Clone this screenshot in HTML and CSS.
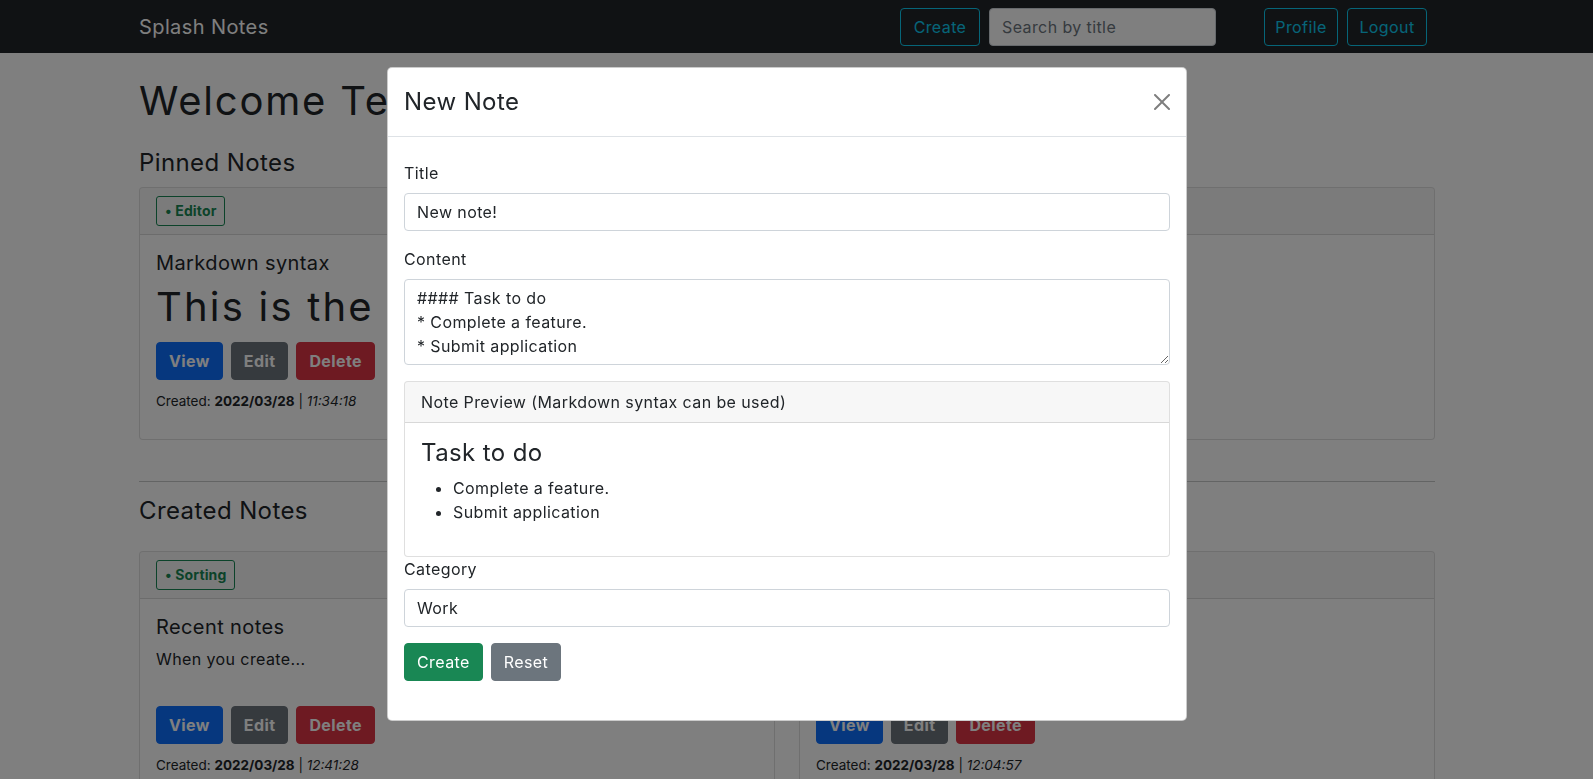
FILE: index.html
```html
<!DOCTYPE html>
<html lang="en">
<head>
<meta charset="utf-8">
<title>Splash Notes</title>
<link rel="stylesheet" href="styles.css">
</head>
<body>
<nav class="navbar">
  <div class="container nav-inner">
    <a class="brand" href="#">Splash Notes</a>
    <div class="nav-right">
      <form class="search-form">
        <button type="button" class="btn btn-outline-info nav-btn-create">Create</button>
        <input class="form-control search" type="search" placeholder="Search by title">
      </form>
      <div class="nav-links">
        <button type="button" class="btn btn-outline-info nav-btn-profile">Profile</button>
        <button type="button" class="btn btn-outline-info nav-btn-logout">Logout</button>
      </div>
    </div>
  </div>
</nav>

<div class="page-wrap">
  <main class="container page">
    <h1 class="welcome">Welcome Tester</h1>

    <h4 class="section-title">Pinned Notes</h4>
    <div class="card">
      <div class="card-header"><span class="cat-badge">&bull; Editor</span></div>
      <div class="card-body">
        <div class="note-preview">
          <h5 class="note-title">Markdown syntax</h5>
          <div class="note-md"><h1>This is the Markdown</h1></div>
        </div>
        <div class="note-actions">
          <button type="button" class="btn btn-bold btn-primary">View</button>
          <button type="button" class="btn btn-bold btn-secondary">Edit</button>
          <button type="button" class="btn btn-bold btn-danger">Delete</button>
        </div>
        <p class="note-meta">Created: <b>2022/03/28</b> | <i>11:34:18</i></p>
      </div>
    </div>

    <hr class="divider">

    <h4 class="section-title">Created Notes</h4>
    <div class="notes-grid">
      <div class="card">
        <div class="card-header"><span class="cat-badge">&bull; Sorting</span></div>
        <div class="card-body">
          <div class="note-preview">
            <h5 class="note-title">Recent notes</h5>
            <div class="note-md"><p>When you create...</p></div>
          </div>
          <div class="note-actions">
            <button type="button" class="btn btn-bold btn-primary">View</button>
            <button type="button" class="btn btn-bold btn-secondary">Edit</button>
            <button type="button" class="btn btn-bold btn-danger">Delete</button>
          </div>
          <p class="note-meta">Created: <b>2022/03/28</b> | <i>12:41:28</i></p>
        </div>
      </div>
      <div class="card">
        <div class="card-header"><span class="cat-badge">&bull; Work</span></div>
        <div class="card-body">
          <div class="note-preview">
            <h5 class="note-title">Weekly plan</h5>
            <div class="note-md"><p>Things to finish...</p></div>
          </div>
          <div class="note-actions">
            <button type="button" class="btn btn-bold btn-primary">View</button>
            <button type="button" class="btn btn-bold btn-secondary">Edit</button>
            <button type="button" class="btn btn-bold btn-danger">Delete</button>
          </div>
          <p class="note-meta">Created: <b>2022/03/28</b> | <i>12:04:57</i></p>
        </div>
      </div>
    </div>
  </main>
</div>

<div class="backdrop"></div>

<div class="modal">
  <div class="modal-dialog">
    <div class="modal-content">
      <div class="modal-header">
        <h4 class="modal-title">New Note</h4>
        <button type="button" class="btn-close" aria-label="Close">
          <svg width="16" height="16" viewBox="0 0 16 16"><path fill="#000" d="M.293.293a1 1 0 0 1 1.414 0L8 6.586 14.293.293a1 1 0 1 1 1.414 1.414L9.414 8l6.293 6.293a1 1 0 0 1-1.414 1.414L8 9.414l-6.293 6.293a1 1 0 0 1-1.414-1.414L6.586 8 .293 1.707a1 1 0 0 1 0-1.414z"/></svg>
        </button>
      </div>
      <div class="modal-body">
        <form class="note-form">
          <div class="field">
            <label class="form-label">Title</label>
            <input class="form-control" type="text" value="New note!">
          </div>
          <div class="field">
            <label class="form-label">Content</label>
            <textarea class="form-control content-area">#### Task to do
* Complete a feature.
* Submit application</textarea>
          </div>
          <div class="card preview-card">
            <div class="card-header preview-header">Note Preview (Markdown syntax can be used)</div>
            <div class="card-body">
              <h4 class="preview-title">Task to do</h4>
              <ul class="preview-list">
                <li>Complete a feature.</li>
                <li>Submit application</li>
              </ul>
            </div>
          </div>
          <div class="field">
            <label class="form-label">Category</label>
            <input class="form-control" type="text" value="Work">
          </div>
          <div class="form-actions">
            <button type="button" class="btn btn-success">Create</button>
            <button type="button" class="btn btn-secondary">Reset</button>
          </div>
        </form>
      </div>
    </div>
  </div>
</div>
</body>
</html>
```
FILE: styles.css
```css
* { box-sizing: border-box; }

html, body {
  margin: 0;
  height: 100%;
}

body {
  font-family: Inter, "Noto Sans", "DejaVu Sans", sans-serif;
  font-size: 16px;
  line-height: 1.5;
  letter-spacing: .025em;
  color: #212529;
  background: #fff;
  overflow: hidden;
}

.container {
  max-width: 1320px;
  margin: 0 auto;
  padding: 0 12px;
}

/* ---------- navbar ---------- */
.navbar {
  background: #212529;
  padding-right: 19px;
}

.nav-inner {
  height: 53px;
  display: flex;
  align-items: center;
}

.brand {
  font-size: 20px;
  line-height: 30px;
  color: #fff;
  text-decoration: none;
}

.nav-right {
  margin-left: auto;
  margin-right: 8px;
  display: flex;
  align-items: center;
}

.search-form {
  display: flex;
  gap: 9px;
  margin: 0 48px 0 0;
}

.nav-links {
  display: flex;
  gap: 9px;
}

/* ---------- buttons & inputs ---------- */
.btn {
  display: inline-block;
  font: inherit;
  letter-spacing: inherit;
  line-height: 24px;
  padding: 6px 12px;
  border: 1px solid transparent;
  border-radius: 4px;
  color: #fff;
  background: transparent;
  text-align: center;
  cursor: pointer;
}

.btn-outline-info {
  color: #0dcaf0;
  border-color: #0dcaf0;
  padding-left: 0;
  padding-right: 0;
}

.nav-btn-create { width: 80px; }
.nav-btn-profile { width: 74px; }
.nav-btn-logout { width: 80px; }

.btn-bold { font-weight: 700; }

.btn-primary { background: #0d6efd; border-color: #0d6efd; }
.btn-secondary { background: #6c757d; border-color: #6c757d; }
.btn-danger { background: #dc3545; border-color: #dc3545; }
.btn-success { background: #198754; border-color: #198754; }

.form-control {
  display: block;
  width: 100%;
  font: inherit;
  letter-spacing: inherit;
  line-height: 24px;
  padding: 6px 12px;
  color: #212529;
  background: #fff;
  border: 1px solid #ced4da;
  border-radius: 4px;
  outline: none;
}

.form-control::placeholder { color: #6c757d; }

.search { width: 227px; }

/* ---------- page ---------- */
.page-wrap { padding-right: 19px; }

.page { padding-top: 24px; }

h1, h4, h5 {
  margin: 0;
  font-weight: 400;
  line-height: 1.2;
}

.welcome {
  font-size: 40px;
  letter-spacing: .045em;
  margin-bottom: 24px;
}

.section-title {
  font-size: 24px;
  margin: 0 0 9.5px;
}

.divider + .section-title {
  margin-bottom: 25.4px;
}

.card {
  background: #fff;
  border: 1px solid rgba(0, 0, 0, .125);
  border-radius: 4px;
}

.card-header {
  display: flex;
  padding: 8px 16px;
  background: rgba(0, 0, 0, .03);
  border-bottom: 1px solid rgba(0, 0, 0, .125);
  border-radius: 3px 3px 0 0;
}

.card-body { padding: 16px; }

.cat-badge {
  display: inline-block;
  height: 30px;
  padding: 0 8px;
  line-height: 28px;
  font-size: 14px;
  font-weight: 700;
  letter-spacing: .01em;
  color: #198754;
  border: 1px solid #198754;
  border-radius: 3px;
}

.note-preview {
  height: 90.5px;
  overflow: hidden;
}

.note-title {
  font-size: 20px;
  margin-bottom: 8px;
}

.note-md h1 {
  font-size: 40px;
  letter-spacing: .055em;
  margin-bottom: 8px;
  white-space: nowrap;
}

.note-md p { margin: 0 0 16px; }

.note-actions {
  display: flex;
  gap: 8px;
}

.note-meta {
  font-size: 13.5px;
  line-height: 21px;
  letter-spacing: 0;
  margin: 11.5px 0 11px;
}

.divider {
  height: 0;
  margin: 41px 0 15px;
  border: 0;
  border-top: 1px solid #212529;
  opacity: .25;
}

.notes-grid {
  display: grid;
  grid-template-columns: 1fr 1fr;
  gap: 24px;
}

/* ---------- modal ---------- */
.backdrop {
  position: fixed;
  inset: 0;
  background: rgba(0, 0, 0, .5);
  z-index: 1050;
}

.modal {
  position: fixed;
  inset: 0;
  padding-right: 19px;
  z-index: 1055;
}

.modal-dialog {
  width: 800px;
  margin: 67px auto 0;
}

.modal-content {
  background: #fff;
  border: 1px solid rgba(0, 0, 0, .2);
  border-radius: 5px;
}

.modal-header {
  display: flex;
  align-items: center;
  padding: 16px;
  border-bottom: 1px solid #dee2e6;
}

.modal-title {
  font-size: 24px;
  line-height: 1.5;
}

.btn-close {
  box-sizing: content-box;
  width: 16px;
  height: 16px;
  padding: 8px;
  margin: -8px -8px -8px auto;
  border: 0;
  background: transparent;
  opacity: .5;
  cursor: pointer;
}

.btn-close svg { display: block; }

.modal-body { padding: 16px; }

.note-form { margin: 8px 0 23px; }

.field { margin-bottom: 16px; }

.form-label {
  display: block;
  margin-bottom: 8px;
}

.content-area {
  height: 86px;
  resize: vertical;
}

.preview-header { display: block; }

.preview-title {
  font-size: 24px;
  margin-bottom: 8px;
}

.preview-list {
  margin: 0 0 16px;
  padding-left: 32px;
}

.form-actions {
  display: flex;
  gap: 8px;
}
```
